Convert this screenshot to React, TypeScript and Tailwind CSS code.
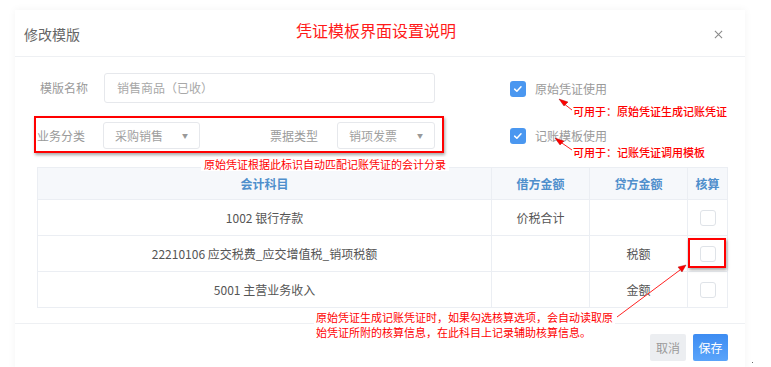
import React from "react";

const cols = ["w-[454px]", "w-[98px]", "w-[98px]", "w-[41px]"];

const rows = [
  { subject: "1002 银行存款", debit: "价税合计", credit: "" },
  { subject: "22210106 应交税费_应交增值税_销项税额", debit: "", credit: "税额" },
  { subject: "5001 主营业务收入", debit: "", credit: "金额" },
];

function CheckedBox({ label }: { label: string }) {
  return (
    <div className="flex items-center">
      <span className="w-[16px] h-[16px] rounded-[3px] bg-[#4a97f0] flex items-center justify-center">
        <svg viewBox="0 0 16 16" className="w-[12px] h-[12px]" fill="none" stroke="#fff" strokeWidth={2} strokeLinecap="round" strokeLinejoin="round">
          <path d="M3.5 8.2l3 2.8 5.5-6" />
        </svg>
      </span>
      <span className="ml-[9px] text-[12px] text-[#9a9a9a]">{label}</span>
    </div>
  );
}

function Select({ value, width }: { value: string; width: string }) {
  return (
    <div className={`${width} h-[27px] border border-[#e6e8ec] rounded-[3px] flex items-center justify-between pl-[11px] pr-[11px]`}>
      <span className="text-[12px] text-[#a0a0a0]">{value}</span>
      <span className="text-[6px] text-[#999]">▼</span>
    </div>
  );
}

function Arrow({ d, head }: { d: string; head: string }) {
  return (
    <>
      <path d={d} stroke="#f22" strokeWidth={1} fill="none" />
      <polygon points={head} fill="#f00" stroke="#900" strokeWidth={0.4} />
    </>
  );
}

export default function App() {
  return (
    <div className="relative w-[771px] h-[367px] overflow-hidden bg-white font-['Noto_Sans_CJK_SC',sans-serif]">
      <div className="ml-[15px] mt-[10px] w-[730px] h-[360px] bg-white shadow-[0_0_8px_rgba(0,0,0,0.05)] flex flex-col">
        {/* header */}
        <div className="h-[47px] shrink-0 flex items-center justify-between pl-[9px] pr-[22px] border-b border-[#eef0f3]">
          <span className="text-[14px] text-[#666] pt-[3px]">修改模版</span>
          <svg viewBox="0 0 10 10" className="w-[9px] h-[9px] mt-[3px]" stroke="#8a8a8a" strokeWidth={1.2}>
            <path d="M1 1l8 8M9 1l-8 8" />
          </svg>
        </div>

        {/* body */}
        <div className="h-[266px] shrink-0 px-[22px] pt-[16px]">
          <div className="flex">
            <div className="flex flex-col gap-[19px]">
              <div className="flex items-center h-[30px]">
                <span className="w-[67px] pl-[3px] text-[12px] text-[#9a9a9a]">模版名称</span>
                <div className="w-[331px] h-[30px] border border-[#e6e8ec] rounded-[3px] flex items-center pl-[12px] text-[12px] text-[#a8a8a8]">
                  销售商品（已收）
                </div>
              </div>
              <div className="flex items-center h-[27px]">
                <span className="w-[66px] text-[12px] text-[#9a9a9a]">业务分类</span>
                <Select value="采购销售" width="w-[97px]" />
                <span className="w-[137px] pr-[19px] text-right text-[12px] text-[#9a9a9a]">票据类型</span>
                <Select value="销项发票" width="w-[98px]" />
              </div>
            </div>
            <div className="ml-[75px] flex flex-col">
              <div className="h-[30px] flex items-center pt-[2px]">
                <CheckedBox label="原始凭证使用" />
              </div>
              <div className="h-[27px] mt-[19px] flex items-center">
                <CheckedBox label="记账模板使用" />
              </div>
            </div>
          </div>

          {/* table */}
          <div className="mt-[18px] w-[691px] border border-[#ebeef3]">
            <div className="flex h-[31px] bg-[#f6f8fb] text-[12px] font-bold text-[#4f8fcc]">
              <div className={`${cols[0]} flex items-center justify-center border-r border-[#ebeef3]`}>会计科目</div>
              <div className={`${cols[1]} flex items-center justify-center border-r border-[#ebeef3]`}>借方金额</div>
              <div className={`${cols[2]} flex items-center justify-center border-r border-[#ebeef3]`}>贷方金额</div>
              <div className="flex-1 flex items-center justify-center">核算</div>
            </div>
            {rows.map((r) => (
              <div key={r.subject} className="flex h-[36px] border-t border-[#ebeef3] text-[12px] text-[#555]">
                <div className={`${cols[0]} flex items-center justify-center border-r border-[#ebeef3]`}>{r.subject}</div>
                <div className={`${cols[1]} flex items-center justify-center border-r border-[#ebeef3]`}>{r.debit}</div>
                <div className={`${cols[2]} flex items-center justify-center border-r border-[#ebeef3]`}>{r.credit}</div>
                <div className="flex-1 flex items-center justify-center">
                  <span className="w-[16px] h-[16px] rounded-[3px] border border-[#dfe3e8] bg-white" />
                </div>
              </div>
            ))}
          </div>
        </div>

        {/* footer */}
        <div className="flex-1 border-t border-[#eef0f3] flex justify-end items-start pt-[10px] pr-[17px] gap-[7px]">
          <button className="w-[36px] h-[27px] rounded-[2px] bg-[#eceef1] text-[12px] text-[#9a9a9a]">取消</button>
          <button className="w-[35px] h-[27px] rounded-[2px] bg-gradient-to-b from-[#3d8cf2] to-[#5aa4fa] text-[12px] text-white">保存</button>
        </div>
      </div>

      {/* annotations */}
      <div className="absolute left-[296px] top-[19px] text-[16px] leading-[22px] text-[#ff1a1a]">凭证模板界面设置说明</div>
      <div className="absolute left-[573px] top-[104px] text-[11px] leading-[14px] font-medium text-[#f00]">可用于：原始凭证生成记账凭证</div>
      <div className="absolute left-[573px] top-[145px] text-[11px] leading-[14px] font-medium text-[#f00]">可用于：记账凭证调用模板</div>
      <div className="absolute left-[34px] top-[116px] w-[410px] h-[37px] border-2 border-[#f00] shadow-[1px_2px_3px_rgba(0,0,0,0.35)]" />
      <div className="absolute left-[201px] top-[157px] px-[3px] bg-white text-[11px] leading-[14px] text-[#f00]">原始凭证根据此标识自动匹配记账凭证的会计分录</div>
      <div className="absolute left-[688px] top-[238px] w-[38px] h-[30px] border-2 border-[#f00] shadow-[1px_2px_3px_rgba(0,0,0,0.35)]" />
      <div className="absolute left-[314px] top-[310px] px-[2px] bg-white text-[11px] leading-[15px] text-[#f00]">
        原始凭证生成记账凭证时，如果勾选核算选项，会自动读取原
        <br />
        始凭证所附的核算信息，在此科目上记录辅助核算信息。
      </div>
      <svg className="absolute left-0 top-0 w-[771px] h-[367px] pointer-events-none" viewBox="0 0 771 367">
        <Arrow d="M572 110L563 103" head="559,99 568,102 564,106" />
        <Arrow d="M572 150L559 141" head="555,138 564,141 560,145" />
        <Arrow d="M617 317L680 270" head="686,265 678,267 682,272" />
      </svg>
      <span className="absolute left-[752px] top-[362px] w-[1px] h-[1px] bg-[#666]" />
    </div>
  );
}
